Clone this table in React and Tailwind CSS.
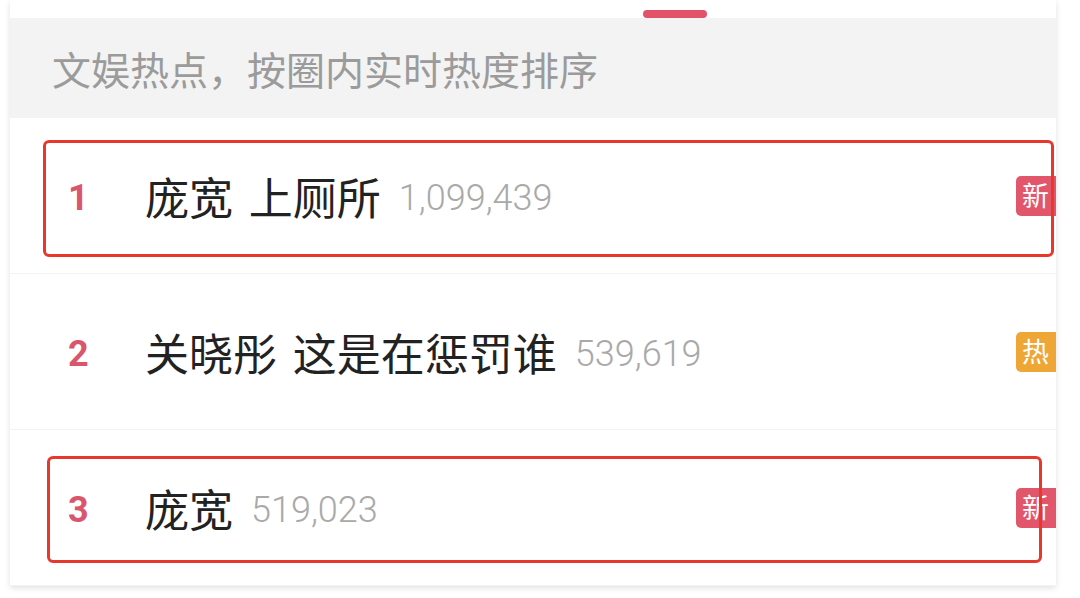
import React from 'react';

const rows = [
    { rank: 1, title: '庞宽 上厕所', count: '1,099,439', tag: '新', tagColor: 'bg-[#e2566c]' },
    { rank: 2, title: '关晓彤 这是在惩罚谁', count: '539,619', tag: '热', tagColor: 'bg-[#eea637]' },
    { rank: 3, title: '庞宽', count: '519,023', tag: '新', tagColor: 'bg-[#e2566c]' },
];

const cjk = "font-['Noto_Sans_CJK_SC','Noto_Sans',sans-serif]";

const App = () => {
    return (
        <div className="w-[1080px] h-[598px] bg-white overflow-hidden">
            <div className="relative ml-[10px] w-[1046px] h-[586px] bg-white overflow-hidden shadow-[0_2px_6px_rgba(0,0,0,0.12)]">
                <div className="h-[18px] pl-[633px] pt-[10px]">
                    <div className="w-[64px] h-[8px] rounded-full bg-[#e25369]"></div>
                </div>
                <div className={`h-[100px] bg-[#f3f3f3] flex items-center pl-[42px] text-[39px] text-[#9b9b9b] ${cjk}`}>
                    文娱热点，按圈内实时热度排序
                </div>

                {rows.map((r) => (
                    <div key={r.rank} className="h-[156px] flex items-center border-b border-[#f3f3f3] last:border-b-0">
                        <div className="w-[135px] pl-[58px] pt-[4px] text-[36px] font-bold text-[#d9566c] font-['Roboto',sans-serif]">{r.rank}</div>
                        <div className={`text-[44px] text-[#222] [word-spacing:6px] ${cjk}`}>{r.title}</div>
                        <div className="ml-[18px] pt-[4px] text-[36px] font-light text-[#a9a9a9] font-['Roboto',sans-serif]">{r.count}</div>
                        <div className={`ml-auto mr-[-10px] w-[50px] h-[40px] pl-[6px] flex items-center rounded-[5px] text-white text-[27px] ${r.tagColor} ${cjk}`}>
                            {r.tag}
                        </div>
                    </div>
                ))}

                <div className="absolute left-[33px] top-[140px] w-[1011px] h-[117px] border-[3px] border-[#e8382c] rounded-[6px]"></div>
                <div className="absolute left-[37px] top-[456px] w-[995px] h-[107px] border-[3px] border-[#e8382c] rounded-[6px]"></div>
            </div>
        </div>
    );
};

export default App;
